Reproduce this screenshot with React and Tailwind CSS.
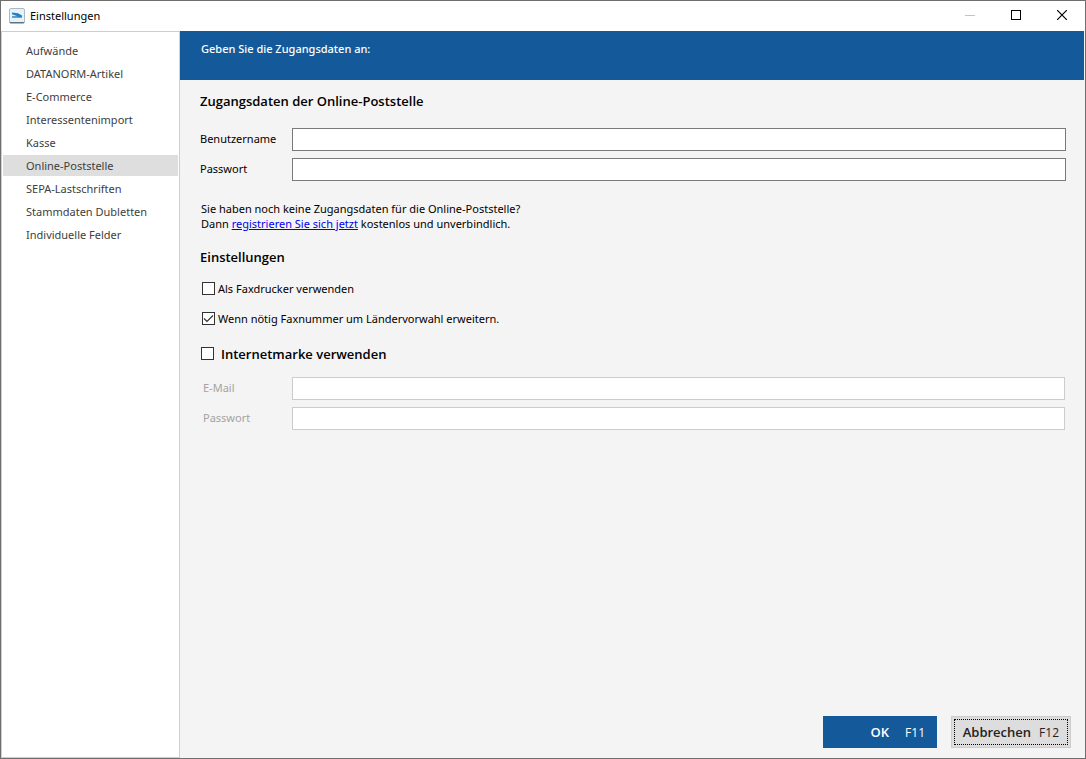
import { useState } from "react";

const menuItems = [
  "Aufwände",
  "DATANORM-Artikel",
  "E-Commerce",
  "Interessentenimport",
  "Kasse",
  "Online-Poststelle",
  "SEPA-Lastschriften",
  "Stammdaten Dubletten",
  "Individuelle Felder",
];

const AppIcon = () => (
  <svg width="16" height="16" viewBox="0 0 16 16" aria-hidden="true">
    <rect x="0.5" y="0.5" width="15" height="15" rx="1.5" fill="#e8f1f6" stroke="#a9bac6" />
    <path d="M1 14.5h14" stroke="#5f7482" />
    <path d="M3 4.500l6 .7 4 2.300v2.500H3V8.200h5.500L3 6.300z" fill="#2380c8" />
    <path d="M3 9.500h10" stroke="#5aa5dc" />
  </svg>
);

const TitleBar = () => (
  <header className="flex h-[30px] items-center bg-white pl-2">
    <AppIcon />
    <h1 className="flex-1 pl-[5px] text-[11px] text-black">Einstellungen</h1>
    <button type="button" aria-label="Minimieren" disabled className="flex h-full w-[46px] items-center justify-center pb-0.5">
      <svg width="10" height="10" viewBox="0 0 10 10" shapeRendering="crispEdges">
        <path d="M0 5.500h10" stroke="#c4c4c4" />
      </svg>
    </button>
    <button type="button" aria-label="Maximieren" className="flex h-full w-[46px] items-center justify-center pb-0.5">
      <svg width="10" height="10" viewBox="0 0 10 10" shapeRendering="crispEdges">
        <rect x="0.5" y="0.5" width="9" height="9" fill="none" stroke="#000" />
      </svg>
    </button>
    <button type="button" aria-label="Schließen" className="flex h-full w-[46px] items-center justify-center pb-0.5">
      <svg width="10" height="10" viewBox="0 0 10 10">
        <path d="M0 0l10 10M10 0L0 10" stroke="#000" strokeWidth="1.2" />
      </svg>
    </button>
  </header>
);

const Sidebar = ({ active, onSelect }) => (
  <nav className="w-[179px] shrink-0 border border-[#c9cce4] bg-white px-px pt-2">
    <ul className="flex flex-col gap-0.5">
      {menuItems.map((item) => (
        <li key={item}>
          <button
            type="button"
            onClick={() => onSelect(item)}
            className={`flex h-[21px] w-full items-center pl-[23px] text-left text-[11px] leading-4 text-[#404040] ${
              item === active ? "bg-[#dedede]" : ""
            }`}
          >
            {item}
          </button>
        </li>
      ))}
    </ul>
  </nav>
);

const Field = ({ id, label, type = "text", disabled = false }) => (
  <div className="flex h-[23px] items-center">
    <label
      htmlFor={id}
      className={`w-[92px] shrink-0 pb-0.5 text-[11px] leading-4 ${
        disabled ? "pl-[3px] text-[#a3a3a3]" : "text-black"
      }`}
    >
      {label}
    </label>
    <input
      id={id}
      type={type}
      disabled={disabled}
      className={`h-full min-w-0 flex-1 border bg-white px-1 text-[11px] outline-none ${
        disabled ? "border-[#cccccc]" : "border-[#7a7a7a]"
      }`}
    />
  </div>
);

const CheckBox = ({ label, checked, onChange, className = "gap-[3px] pl-0.5 text-[11px]" }) => (
  <label className={`flex h-[19px] items-center text-black ${className}`}>
    <span className="relative size-[13px]">
      <input
        type="checkbox"
        checked={checked}
        onChange={(e) => onChange(e.target.checked)}
        className="block size-[13px] appearance-none border border-[#333333] bg-white"
      />
      {checked && (
        <svg className="pointer-events-none absolute inset-0" width="13" height="13" viewBox="0 0 13 13">
          <path d="M2 6.500l3 3 6-6" fill="none" stroke="#333" strokeWidth="1.200" />
        </svg>
      )}
    </span>
    <span className="leading-4">{label}</span>
  </label>
);

const App = () => {
  const [active, setActive] = useState("Online-Poststelle");
  const [faxPrinter, setFaxPrinter] = useState(false);
  const [extendNumber, setExtendNumber] = useState(true);
  const [stamp, setStamp] = useState(false);

  return (
    <div className="flex min-h-screen flex-col border border-[#6f6f6f] bg-[#f4f4f4] font-['Noto_Sans','Open_Sans',sans-serif]">
      <TitleBar />

      <div className="flex flex-1">
        <Sidebar active={active} onSelect={setActive} />

        <main className="flex min-w-0 flex-1 flex-col">
          <div className="mr-px h-[49px] bg-[#145a9a] pt-2.5 pl-[21px] text-[11px] leading-4 text-white">
            <p className="font-medium">Geben Sie die Zugangsdaten an:</p>
          </div>

          <form className="flex flex-1 flex-col" onSubmit={(e) => e.preventDefault()}>
            <div className="pt-[11px] pr-[19px] pl-5">
              <h2 className="font-['Open_Sans','Noto_Sans',sans-serif] text-[13px] leading-5 font-semibold text-black">
                Zugangsdaten der Online-Poststelle
              </h2>
              <div className="mt-[17px] flex flex-col gap-[7px]">
                <Field id="user" label="Benutzername" />
                <Field id="password" label="Passwort" type="password" />
              </div>

              <p className="mt-5 pl-px text-[11px] leading-[15px] text-black">
                Sie haben noch keine Zugangsdaten für die Online-Poststelle?
                <br />
                Dann{" "}
                <a href="#registrieren" className="text-[#0000ee] underline">
                  registrieren Sie sich jetzt
                </a>{" "}
                kostenlos und unverbindlich.
              </p>

              <h2 className="mt-4 font-['Open_Sans','Noto_Sans',sans-serif] text-[13px] leading-5 font-semibold text-black">
                Einstellungen
              </h2>
              <div className="mt-3 flex flex-col gap-[11px]">
                <CheckBox label="Als Faxdrucker verwenden" checked={faxPrinter} onChange={setFaxPrinter} />
                <CheckBox
                  label="Wenn nötig Faxnummer um Ländervorwahl erweitern."
                  checked={extendNumber}
                  onChange={setExtendNumber}
                />
              </div>

              <CheckBox
                label="Internetmarke verwenden"
                checked={stamp}
                onChange={setStamp}
                className="mt-4 gap-[7px] pl-px font-['Open_Sans','Noto_Sans',sans-serif] text-[13px] font-semibold"
              />
              <div className="mt-3.5 mr-px flex flex-col gap-[7px]">
                <Field id="stamp-mail" label="E-Mail" disabled={!stamp} />
                <Field id="stamp-password" label="Passwort" type="password" disabled={!stamp} />
              </div>
            </div>

            <div className="mt-auto flex justify-end gap-3.5 pr-3.5 pb-2.5 font-['Open_Sans','Noto_Sans',sans-serif]">
              <button
                type="submit"
                className="flex h-8 w-[114px] items-center justify-end gap-4 bg-[#145a9a] pt-0.5 pr-3 text-xs text-white"
              >
                <span className="text-[13px] font-semibold">OK</span>
                <span>F11</span>
              </button>
              <button
                type="button"
                className="h-8 w-[120px] border border-[#cccccc] bg-[#dddddd] p-0.5 text-xs text-[#222222]"
              >
                <span className="flex h-full items-center justify-end gap-2 border border-dotted border-black pt-0.5 pr-2">
                  <span className="text-[13px] font-semibold">Abbrechen</span>
                  <span>F12</span>
                </span>
              </button>
            </div>
          </form>
        </main>
      </div>
    </div>
  );
};

export default App;
